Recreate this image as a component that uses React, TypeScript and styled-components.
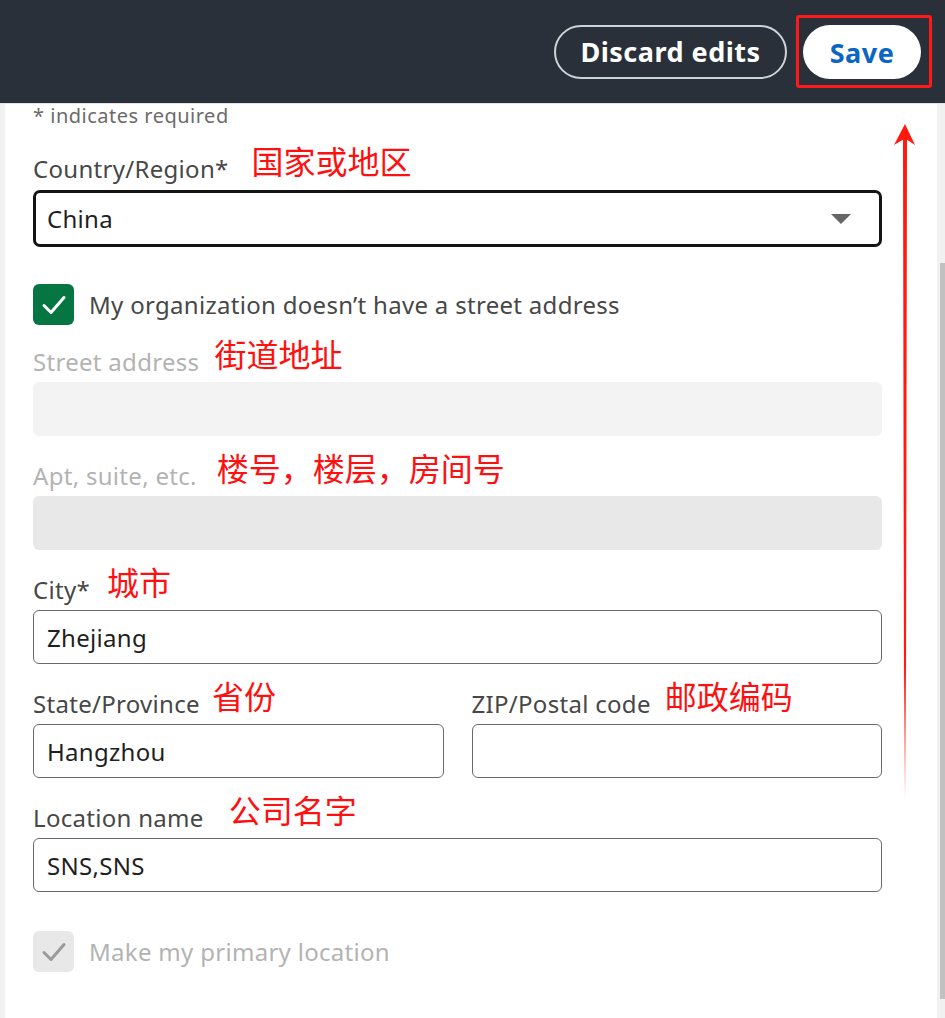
import React from "react";
import styled, { createGlobalStyle } from "styled-components";

const Global = createGlobalStyle`
  html, body { margin: 0; padding: 0; background: #ffffff; }
  body { font-family: "Noto Sans", "Open Sans", Arial, sans-serif; }
  * { box-sizing: border-box; }
`;

const Page = styled.div`
  width: 945px;
  height: 1018px;
  display: flex;
  flex-direction: column;
  overflow: hidden;
  position: relative;
  background: #fff;
`;

const Header = styled.header`
  height: 104px;
  flex: none;
  background: #29303a;
  border-bottom: 1px solid #dfe1e3;
  display: flex;
  align-items: center;
  justify-content: flex-end;
  padding-right: 13px;
  gap: 9px;
`;

const PillButton = styled.button<{ $primary?: boolean }>`
  height: 54px;
  border-radius: 27px;
  font-family: "Noto Sans", Arial, sans-serif;
  font-weight: 700;
  font-size: 27px;
  letter-spacing: 0.5px;
  cursor: pointer;
  display: flex;
  align-items: center;
  justify-content: center;
  padding: 0;
  border: ${(p) => (p.$primary ? "none" : "2px solid #d0d3d6")};
  background: ${(p) => (p.$primary ? "#ffffff" : "transparent")};
  color: ${(p) => (p.$primary ? "#0a66c2" : "#ffffff")};
  width: ${(p) => (p.$primary ? "118px" : "233px")};
`;

const Highlight = styled.div`
  border: 3px solid #ff1a1a;
  border-radius: 3px;
  padding: 7px 8px 6px 4px;
`;

const Body = styled.div`
  flex: 1;
  display: flex;
  min-height: 0;
`;

const Content = styled.main`
  flex: 1;
  border-left: 5px solid #f1f1f1;
  padding: 0 55px 0 28px;
  display: flex;
  flex-direction: column;
`;

const Required = styled.div`
  font-size: 20px;
  line-height: 24px;
  letter-spacing: 0.5px;
  color: #6b6b6b;
  margin-bottom: 27px;
`;

const Field = styled.div<{ $gap?: number }>`
  display: flex;
  flex-direction: column;
  gap: ${(p) => p.$gap ?? 6}px;
`;

const LabelRow = styled.div`
  height: 28px;
  display: flex;
  align-items: center;
`;

const Label = styled.label<{ $disabled?: boolean }>`
  font-size: 24px;
  line-height: 28px;
  letter-spacing: 0.3px;
  color: ${(p) => (p.$disabled ? "#b3b3b3" : "#474747")};
  white-space: nowrap;
`;

const Note = styled.span<{ $gap: number }>`
  font-family: "Noto Sans CJK SC", "Noto Sans", sans-serif;
  font-size: 32px;
  line-height: 32px;
  color: #ff1010;
  margin-left: ${(p) => p.$gap}px;
  margin-bottom: 18px;
  white-space: nowrap;
`;

const Input = styled.div<{ $variant?: "normal" | "disabled" | "disabled2" }>`
  height: 54px;
  border-radius: 6px;
  display: flex;
  align-items: center;
  padding: 0 13px;
  font-size: 24px;
  letter-spacing: 0.3px;
  color: #1f1f1f;
  border: ${(p) =>
    p.$variant === "disabled" || p.$variant === "disabled2"
      ? "none"
      : "1.5px solid #6a6a6a"};
  background: ${(p) =>
    p.$variant === "disabled"
      ? "#f3f3f3"
      : p.$variant === "disabled2"
      ? "#e8e8e8"
      : "#ffffff"};
`;

const Select = styled.div`
  height: 57px;
  border: 3px solid #141414;
  border-radius: 7px;
  display: flex;
  align-items: center;
  justify-content: space-between;
  padding: 0 28px 0 11px;
  font-size: 24px;
  letter-spacing: 0.3px;
  color: #1f1f1f;
`;

const Caret = styled.span`
  width: 0;
  height: 0;
  border-left: 10px solid transparent;
  border-right: 10px solid transparent;
  border-top: 10px solid #666666;
`;

const Stack = styled.div<{ $gap: number; $top: number }>`
  display: flex;
  flex-direction: column;
  gap: ${(p) => p.$gap}px;
  margin-top: ${(p) => p.$top}px;
`;

const Row = styled.div`
  display: flex;
  gap: 28px;
  & > * {
    flex: 1 1 0;
  }
`;

const CheckRow = styled.div<{ $disabled?: boolean; $top: number }>`
  display: flex;
  align-items: center;
  gap: 15px;
  margin-top: ${(p) => p.$top}px;
  font-size: 24px;
  letter-spacing: 0.3px;
  color: ${(p) => (p.$disabled ? "#b3b3b3" : "#474747")};
  white-space: nowrap;
`;

const Box = styled.span<{ $disabled?: boolean }>`
  width: 41px;
  height: 41px;
  flex: none;
  border-radius: 6px;
  display: flex;
  align-items: center;
  justify-content: center;
  background: ${(p) => (p.$disabled ? "#e8e8e8" : "#057642")};
`;

const Scroll = styled.div`
  width: 8px;
  flex: none;
  background: #f1f1f1;
  padding: 159px 0 19px 3px;
  display: flex;
`;

const Thumb = styled.div`
  flex: 1;
  background: #c1c1c1;
`;

const Arrow = styled.svg`
  position: absolute;
  left: 890px;
  top: 120px;
  pointer-events: none;
`;

const Check = ({ color }: { color: string }) => (
  <svg width="26" height="22" viewBox="0 0 26 22">
    <path d="M3 11.5 L10 18.5 L23 3.5" fill="none" stroke={color} strokeWidth="3" strokeLinecap="round" strokeLinejoin="round" />
  </svg>
);

export default function App() {
  return (
    <Page>
      <Global />
      <Header>
        <PillButton>Discard edits</PillButton>
        <Highlight>
          <PillButton $primary>Save</PillButton>
        </Highlight>
      </Header>
      <Body>
        <Content>
          <Required>* indicates required</Required>
          <Field $gap={7}>
            <LabelRow>
              <Label>Country/Region*</Label>
              <Note $gap={23}>国家或地区</Note>
            </LabelRow>
            <Select>
              <span>China</span>
              <Caret />
            </Select>
          </Field>
          <CheckRow $top={37}>
            <Box>
              <Check color="#ffffff" />
            </Box>
            My organization doesn’t have a street address
          </CheckRow>
          <Stack $gap={26} $top={23}>
            <Field>
              <LabelRow>
                <Label $disabled>Street address</Label>
                <Note $gap={15}>街道地址</Note>
              </LabelRow>
              <Input $variant="disabled" />
            </Field>
            <Field>
              <LabelRow>
                <Label $disabled>Apt, suite, etc.</Label>
                <Note $gap={20}>楼号，楼层，房间号</Note>
              </LabelRow>
              <Input $variant="disabled2" />
            </Field>
            <Field>
              <LabelRow>
                <Label>City*</Label>
                <Note $gap={17}>城市</Note>
              </LabelRow>
              <Input>Zhejiang</Input>
            </Field>
            <Row>
              <Field>
                <LabelRow>
                  <Label>State/Province</Label>
                  <Note $gap={12}>省份</Note>
                </LabelRow>
                <Input>Hangzhou</Input>
              </Field>
              <Field>
                <LabelRow>
                  <Label>ZIP/Postal code</Label>
                  <Note $gap={14}>邮政编码</Note>
                </LabelRow>
                <Input />
              </Field>
            </Row>
            <Field>
              <LabelRow>
                <Label>Location name</Label>
                <Note $gap={25}>公司名字</Note>
              </LabelRow>
              <Input>SNS,SNS</Input>
            </Field>
          </Stack>
          <CheckRow $disabled $top={39}>
            <Box $disabled>
              <Check color="#9a9a9a" />
            </Box>
            Make my primary location
          </CheckRow>
        </Content>
        <Scroll>
          <Thumb />
        </Scroll>
      </Body>
      <Arrow width="30" height="690" viewBox="0 0 30 690">
        <defs>
          <linearGradient id="fade" x1="0" y1="0" x2="0" y2="1">
            <stop offset="0" stopColor="#ff1a0d" stopOpacity="1" />
            <stop offset="0.8" stopColor="#ff1a0d" stopOpacity="1" />
            <stop offset="1" stopColor="#ff1a0d" stopOpacity="0" />
          </linearGradient>
        </defs>
        <path d="M15 4 L25 25 L17.5 20 L17 20 L15.8 680 L14.2 680 L13 20 L12.5 20 L4 25 Z" fill="url(#fade)" />
      </Arrow>
    </Page>
  );
}
